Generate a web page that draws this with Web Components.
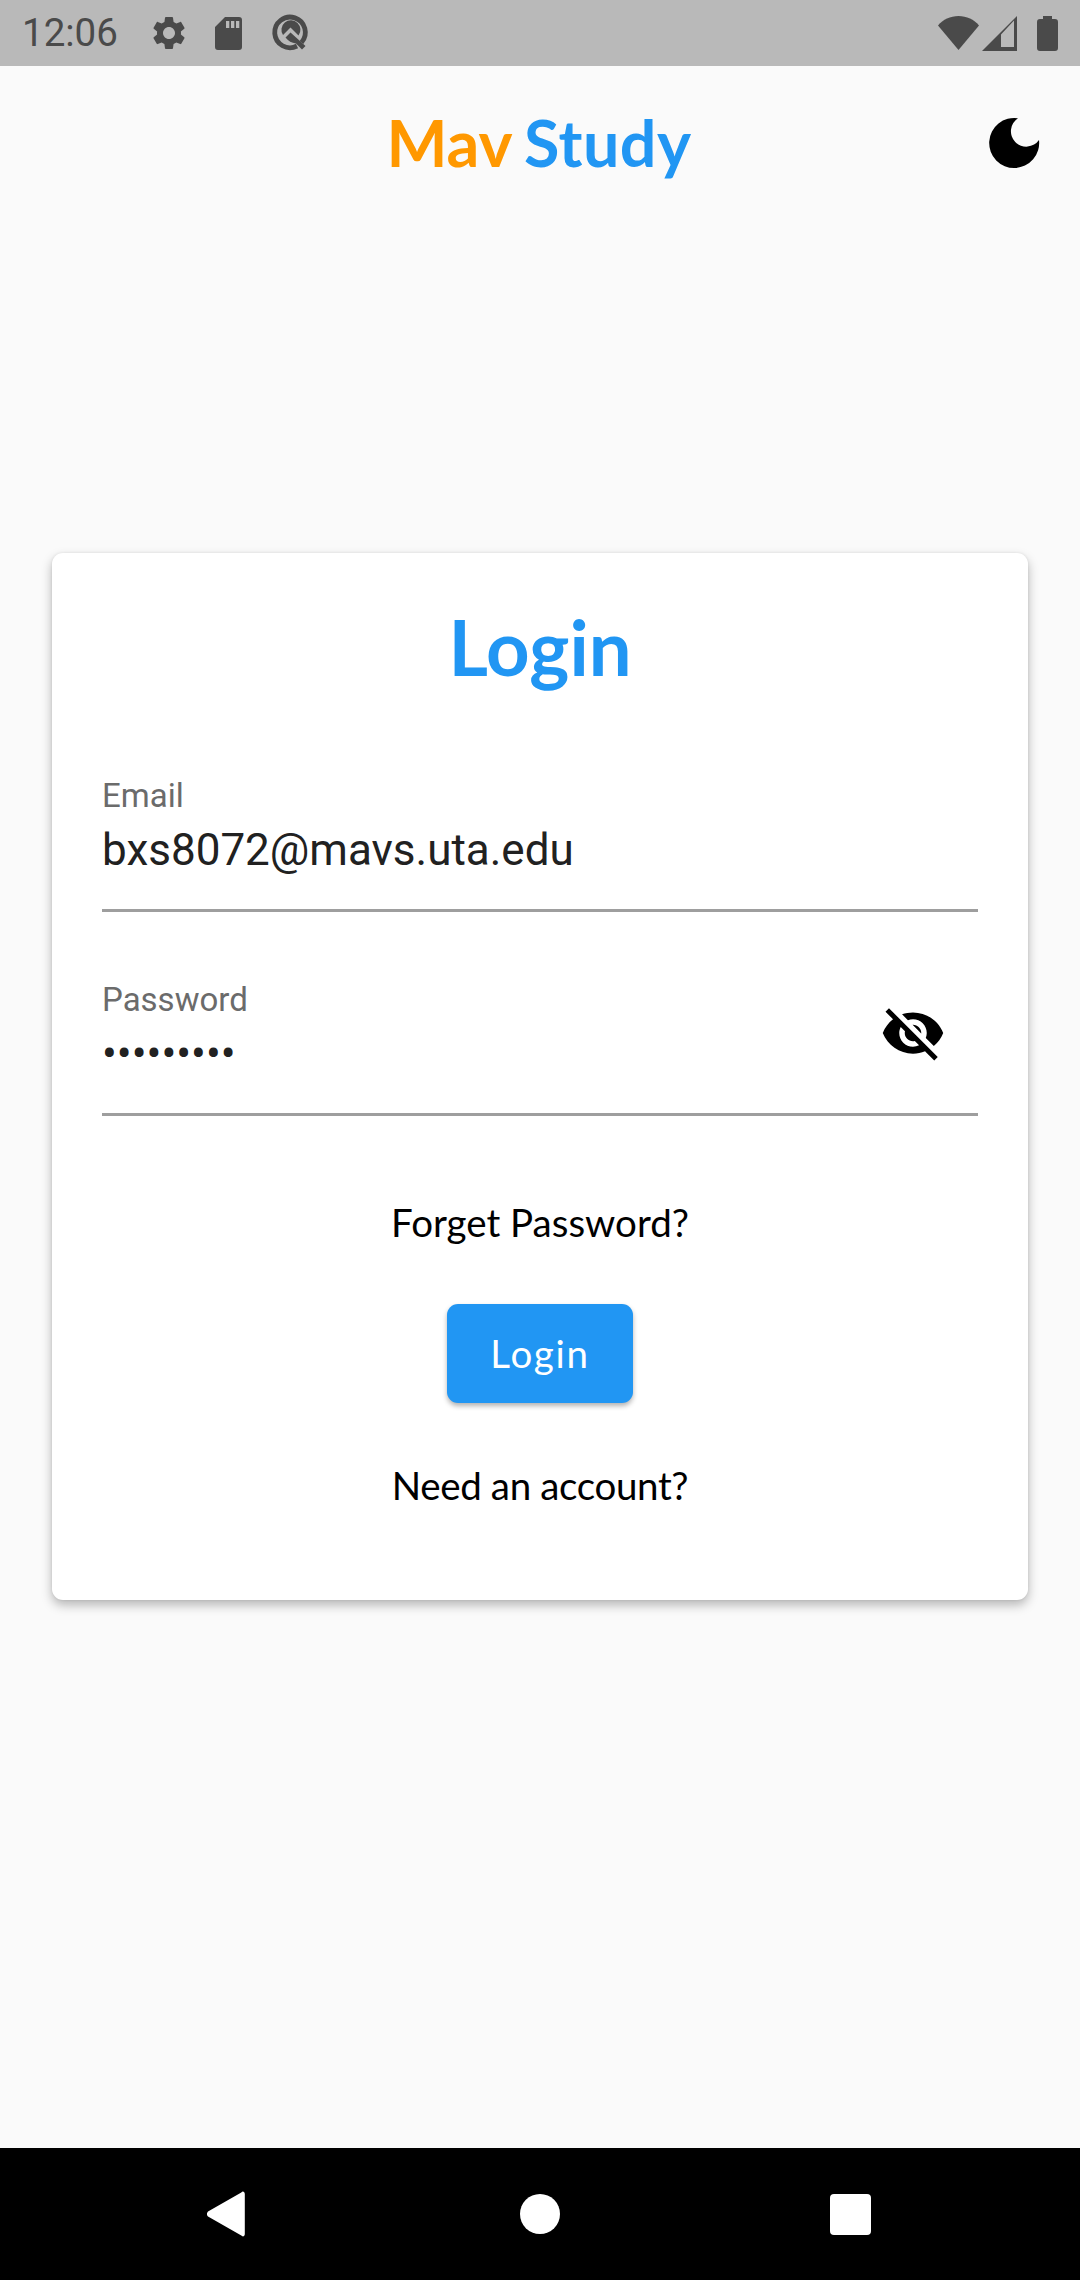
<!DOCTYPE html>
<html>
<head>
<meta charset="utf-8">
<title>Mav Study</title>
<style>
html, body { margin: 0; height: 100%; background: #fafafa; }
</style>
</head>
<body>
<mav-app>
  <status-bar slot="status"></status-bar>
  <app-header slot="header"></app-header>
  <login-card slot="main">
    <text-field label="Email" value="bxs8072@mavs.uta.edu"></text-field>
    <text-field label="Password" value="•••••••••" obscure></text-field>
  </login-card>
  <nav-bar slot="nav"></nav-bar>
</mav-app>

<script>
class MavApp extends HTMLElement {
  connectedCallback() {
    this.attachShadow({ mode: 'open' }).innerHTML = `
<style>
  :host { display: flex; flex-direction: column; height: 2280px; background: #fafafa; }
  main { flex: 1; padding: 333px 52px 0; }
</style>
<slot name="status"></slot>
<slot name="header"></slot>
<main><slot name="main"></slot></main>
<slot name="nav"></slot>`;
  }
}

class StatusBar extends HTMLElement {
  connectedCallback() {
    this.attachShadow({ mode: 'open' }).innerHTML = `
<style>
  :host { display: flex; align-items: center; height: 66px; padding: 0 22px; box-sizing: border-box;
    background: #b9b9b9; color: #4a4a4a; font: 400 38.5px Roboto, sans-serif; }
  svg { display: block; fill: #4a4a4a; flex: none; }
  .time { width: 93px; margin-right: 34px; line-height: 66px; white-space: nowrap; }
  .left, .right { display: flex; align-items: center; }
  .right { margin-left: auto; }
</style>
<span class="time">12:06</span>
<div class="left">
  <svg width="40" height="40" viewBox="0 0 24 24"><path d="M19.14 12.94c.04-.3.06-.61.06-.94 0-.32-.02-.64-.07-.94l2.03-1.58c.18-.14.23-.41.12-.61l-1.92-3.32c-.12-.22-.37-.29-.59-.22l-2.39.96c-.5-.38-1.03-.7-1.62-.94l-.36-2.54c-.04-.24-.24-.41-.48-.41h-3.84c-.24 0-.43.17-.47.41l-.36 2.54c-.59.24-1.13.57-1.62.94l-2.39-.96c-.22-.08-.47 0-.59.22L2.74 8.87c-.12.21-.08.47.12.61l2.03 1.58c-.05.3-.09.63-.09.94s.02.64.07.94l-2.03 1.58c-.18.14-.23.41-.12.61l1.92 3.32c.12.22.37.29.59.22l2.39-.96c.5.38 1.03.7 1.62.94l.36 2.54c.05.24.24.41.48.41h3.84c.24 0 .44-.17.47-.41l.36-2.54c.59-.24 1.13-.56 1.62-.94l2.39.96c.22.08.47 0 .59-.22l1.92-3.32c.12-.22.07-.47-.12-.61l-2.01-1.58zM12 15.6c-1.98 0-3.6-1.62-3.6-3.6s1.62-3.6 3.6-3.6 3.6 1.62 3.6 3.6-1.62 3.6-3.6 3.6z"/></svg>
  <svg style="margin-left:26px" width="27" height="33" viewBox="0 0 27 33"><path fill-rule="evenodd" d="M10 0h14a3 3 0 0 1 3 3v27a3 3 0 0 1-3 3H3a3 3 0 0 1-3-3V10zM11 4v7h3.300V4zm5 0v7h3.300V4zm5 0v7h3.300V4z"/></svg>
  <svg style="margin-left:22px" width="54" height="54" viewBox="0 0 54 54">
    <path fill="none" stroke="#4a4a4a" stroke-width="4.800" d="M33 40A15.300 15.300 0 1 1 37.500 36.500"/>
    <path d="M19 29 26.500 21.500 34.500 29.500A9.500 9.500 0 1 0 19 29z"/>
    <path d="M21.500 31.500 26.500 26.500 41.500 40 38 43.500 32 37.500C28 37 24 35 21.500 31.500z"/>
  </svg>
</div>
<div class="right">
  <svg width="41" height="34" viewBox="0 0 41 34"><path d="M20.500 34 0 9.500C5 3.500 12.300 0 20.500 0S36 3.500 41 9.500z"/></svg>
  <svg style="margin-left:3px" width="35" height="35" viewBox="0 0 35 35"><path fill-rule="evenodd" d="M35 0v35H0zM32 4.500 19 18.500V31h13z"/></svg>
  <svg style="margin-left:20px" width="21" height="35" viewBox="0 0 21 35"><path d="M6 0h9v3h3a3 3 0 0 1 3 3v26a3 3 0 0 1-3 3H3a3 3 0 0 1-3-3V6a3 3 0 0 1 3-3h3z"/></svg>
</div>`;
  }
}

class AppHeader extends HTMLElement {
  connectedCallback() {
    this.attachShadow({ mode: 'open' }).innerHTML = `
<style>
  :host { display: flex; align-items: center; justify-content: center; position: relative; height: 154px;
    font: 700 64.6px Lato, sans-serif; }
  .title { transform: translate(-1px, -1px); white-space: pre; word-spacing: -3px; }
  .mav { color: #ff9800; }
  .study { color: #2196f3; letter-spacing: .5px; }
  button { position: absolute; right: 37px; top: 48px; padding: 0; border: 0; background: none; }
  svg { display: block; }
</style>
<div class="title"><span class="mav">Mav</span> <span class="study">Study</span></div>
<button aria-label="Dark mode"><svg width="58" height="58" viewBox="0 0 58 58"><path d="M33 4.300A25 25 0 1 0 54 26 15.400 15.400 0 1 1 33 4.300z"/></svg></button>`;
  }
}

class TextField extends HTMLElement {
  connectedCallback() {
    const obscure = this.hasAttribute('obscure');
    this.attachShadow({ mode: 'open' }).innerHTML = `
<style>
  :host { display: block; height: 136px; box-sizing: border-box; border-bottom: 3px solid #9e9e9e; position: relative; font-family: Roboto, sans-serif; }
  .label { color: #6b6b6b; font-size: 33px; line-height: 39px; }
  .value { color: #212121; font-size: 44px; line-height: 52px; margin-top: 9px; white-space: nowrap; }
  button { position: absolute; right: 32px; top: 20px; padding: 0; border: 0; background: none; }
  svg { display: block; }
</style>
<div class="label">${this.getAttribute('label')}</div>
<div class="value">${this.getAttribute('value')}</div>
${obscure ? `<button aria-label="Show password"><svg width="66" height="66" viewBox="0 0 24 24"><path d="M12 7c2.760 0 5 2.240 5 5 0 .65-.13 1.260-.36 1.830l2.920 2.920c1.510-1.260 2.700-2.890 3.430-4.750-1.730-4.390-6-7.500-11-7.500-1.400 0-2.740.25-3.980.7l2.160 2.160C10.740 7.130 11.350 7 12 7zM2 4.270l2.280 2.280.46.46C3.080 8.300 1.780 10.020 1 12c1.730 4.390 6 7.500 11 7.500 1.550 0 3.030-.3 4.380-.84l.42.42L19.730 22 21 20.730 3.270 3 2 4.270zM7.530 9.800l1.550 1.550c-.05.21-.08.43-.08.65 0 1.660 1.340 3 3 3 .22 0 .44-.03.65-.08l1.550 1.550c-.67.33-1.410.53-2.200.53-2.760 0-5-2.240-5-5 0-.79.2-1.530.53-2.200zm4.310-.78l3.150 3.150.02-.16c0-1.660-1.340-3-3-3l-.17.01z"/></svg></button>` : ''}`;
  }
}

class LoginCard extends HTMLElement {
  connectedCallback() {
    this.attachShadow({ mode: 'open' }).innerHTML = `
<style>
  :host { display: block; height: 1047px; box-sizing: border-box; padding: 0 50px; background: #fff; border-radius: 11px;
    box-shadow: 0 5px 11px rgba(0,0,0,.28), 0 0 3px rgba(0,0,0,.08); font-family: Lato, sans-serif; text-align: center; color: #000; }
  h1 { margin: 0; padding-top: 50px; color: #2196f3; font: 700 76px/88px Lato, sans-serif; }
  .fields { display: flex; flex-direction: column; gap: 68px; margin-top: 85px; text-align: left; }
  .link { font-size: 38.5px; line-height: 46px; }
  .forget { margin-top: 83px; }
  .btn { display: block; width: 186px; height: 99px; margin: 59px auto 0; border-radius: 11px; background: #2196f3; color: #fff;
    font: 400 38.5px/99px Lato, sans-serif; letter-spacing: 1.7px; box-shadow: 0 3px 5px rgba(0,0,0,.3); }
  .need { margin-top: 59px; letter-spacing: -.35px; }
</style>
<h1>Login</h1>
<div class="fields"><slot></slot></div>
<div class="link forget">Forget Password?</div>
<div class="btn">Login</div>
<div class="link need">Need an account?</div>`;
  }
}

class NavBar extends HTMLElement {
  connectedCallback() {
    this.attachShadow({ mode: 'open' }).innerHTML = `
<style>
  :host { display: grid; grid-template-columns: 226px 314px 310px; height: 132px; background: #000; position: relative; }
  div { display: flex; justify-content: flex-end; align-items: center; }
  svg { display: block; fill: #fff; }
</style>
<div><svg style="margin-right:-19px" width="38" height="46" viewBox="0 0 38 46"><path d="M37.800 3v40c0 2.200-2 3.200-3.500 1.600L1 25.500a3.800 3.800 0 0 1 0-5L34.300 1.400C35.800-.2 37.800.8 37.800 3z"/></svg></div>
<div><svg style="margin-right:-20px" width="40" height="40" viewBox="0 0 40 40"><circle cx="20" cy="20" r="20"/></svg></div>
<div><svg style="margin-right:-21px" width="41" height="41" viewBox="0 0 41 41"><rect width="41" height="41" rx="4"/></svg></div>`;
  }
}

customElements.define('mav-app', MavApp);
customElements.define('status-bar', StatusBar);
customElements.define('app-header', AppHeader);
customElements.define('text-field', TextField);
customElements.define('login-card', LoginCard);
customElements.define('nav-bar', NavBar);
</script>
</body>
</html>
